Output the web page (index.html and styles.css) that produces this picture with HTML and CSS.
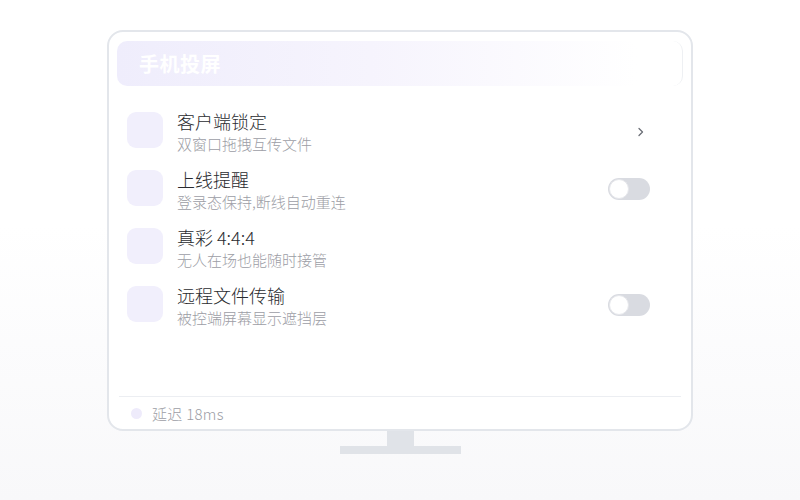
FILE: index.html
```html
<!DOCTYPE html>
<html lang="zh-CN">
<head>
<meta charset="utf-8">
<link rel="stylesheet" href="styles.css">
</head>
<body>
<div class="stage">
  <div class="monitor">
    <div class="header"><span class="header-title">手机投屏</span></div>
    <ul class="list">
      <li class="row">
        <div class="icon"></div>
        <div class="texts"><div class="title">客户端锁定</div><div class="sub">双窗口拖拽互传文件</div></div>
        <svg class="chev" width="6" height="10" viewBox="0 0 6 10"><polyline points="1,1.5 4.5,5 1,8.5" fill="none" stroke="#6b6e76" stroke-width="1.3" stroke-linecap="round" stroke-linejoin="round"/></svg>
      </li>
      <li class="row">
        <div class="icon"></div>
        <div class="texts"><div class="title">上线提醒</div><div class="sub">登录态保持,断线自动重连</div></div>
        <div class="toggle"><span class="knob"></span></div>
      </li>
      <li class="row">
        <div class="icon"></div>
        <div class="texts"><div class="title">真彩 4:4:4</div><div class="sub">无人在场也能随时接管</div></div>
      </li>
      <li class="row">
        <div class="icon"></div>
        <div class="texts"><div class="title">远程文件传输</div><div class="sub">被控端屏幕显示遮挡层</div></div>
        <div class="toggle"><span class="knob"></span></div>
      </li>
    </ul>
    <div class="footer"><span class="dot"></span><span class="latency">延迟 18ms</span></div>
  </div>
  <div class="neck"></div>
  <div class="base"></div>
</div>
</body>
</html>
```
FILE: styles.css
```css
html, body {
  margin: 0;
  padding: 0;
}
body {
  width: 800px;
  height: 500px;
  background: linear-gradient(180deg, #ffffff 0%, #ffffff 45%, #f8f8fa 100%);
  font-family: "Noto Sans CJK SC", "Noto Sans", sans-serif;
  overflow: hidden;
}
.stage {
  display: flex;
  flex-direction: column;
  align-items: center;
  padding-top: 30px;
}
.monitor {
  box-sizing: border-box;
  width: 586px;
  height: 401px;
  border: 2px solid #e3e6eb;
  border-radius: 16px;
  background: #ffffff;
  padding: 9px 8px 0;
  display: flex;
  flex-direction: column;
}
.header {
  height: 45px;
  border-radius: 10px;
  background: linear-gradient(90deg, #efedfc 0%, #f6f4fd 45%, #ffffff 92%);
  border-right: 1px solid #eef0f3;
  display: flex;
  align-items: center;
  padding-left: 22px;
}
.header-title {
  color: #ffffff;
  font-size: 20px;
  font-weight: 700;
  letter-spacing: 0.5px;
}
.list {
  list-style: none;
  margin: 15px 0 0;
  padding: 0;
  flex: 1;
}
.row {
  height: 58px;
  display: flex;
  align-items: center;
  padding: 0 33px 0 10px;
}
.icon {
  width: 36px;
  height: 36px;
  border-radius: 9px;
  background: #f1effc;
  flex: none;
}
.texts {
  margin-left: 14px;
  flex: 1;
  padding-top: 3px;
}
.title {
  font-size: 18px;
  line-height: 24px;
  font-weight: 300;
  color: #2a2b2f;
}
.sub {
  margin-top: 1px;
  font-size: 15px;
  line-height: 20px;
  font-weight: 300;
  color: #9c9da5;
}
.chev {
  margin-right: 6px;
  margin-top: 4px;
}
.toggle {
  position: relative;
  width: 42px;
  height: 22px;
  border-radius: 11px;
  background: #d9dbe1;
  margin-top: 1px;
}
.knob {
  position: absolute;
  left: 1px;
  top: 1px;
  width: 18px;
  height: 18px;
  border-radius: 50%;
  background: #ffffff;
  border: 1px solid #e6e7eb;
}
.footer {
  height: 32px;
  margin: 0 2px;
  border-top: 1px solid #eceef2;
  display: flex;
  align-items: center;
  padding-left: 12px;
}
.dot {
  width: 11px;
  height: 11px;
  border-radius: 50%;
  background: #eeebfb;
}
.latency {
  margin-left: 10px;
  font-size: 15px;
  font-weight: 300;
  letter-spacing: 0.3px;
  color: #9c9da5;
}
.neck {
  width: 27px;
  height: 15px;
  background: #e0e3e8;
}
.base {
  width: 121px;
  height: 8px;
  background: #e0e3e8;
}
```
